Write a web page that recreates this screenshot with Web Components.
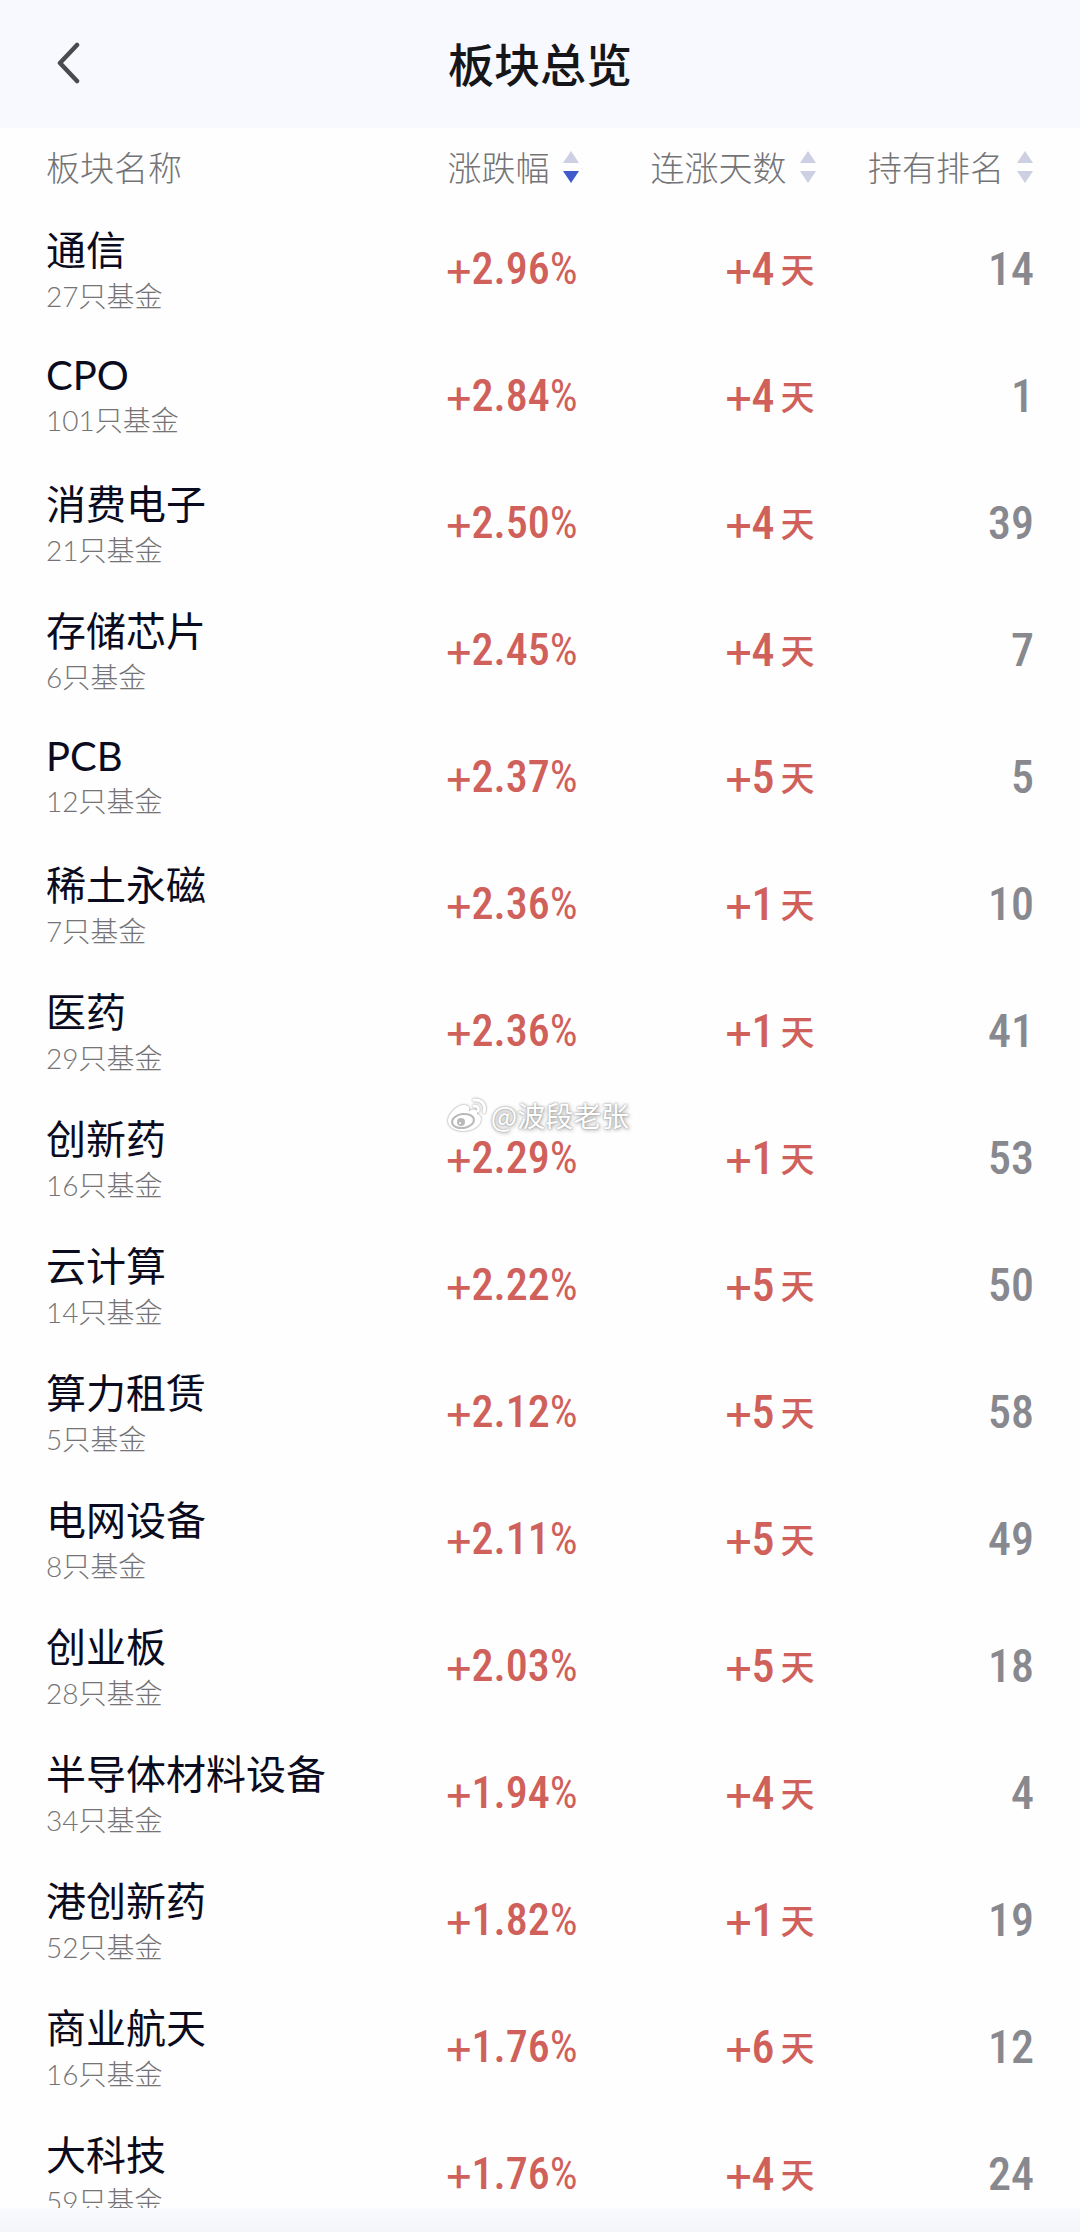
<!DOCTYPE html>
<html lang="zh-CN">
<head>
<meta charset="utf-8">
<meta name="viewport" content="width=device-width, initial-scale=1">
<title>板块总览</title>
<style>
    html, body {
        margin: 0;
        height: 100%;
    }

    body {
        font-family: "Noto Sans CJK SC", "Noto Sans", sans-serif;
        background-color: #fefefe;
        --color-bar: #f8f9fe;
        --color-name: #0b0b20;
        --color-muted: #747477;
        --color-rise: #d0605a;
        --color-rank: #88888f;
        --color-arrow: #cdcfe2;
        --color-arrow-active: #3f5bcb;
        --page-padding: 46px;
        --font-number: "Roboto Condensed", "Liberation Sans Narrow", "Noto Sans CJK SC", sans-serif;
        --font-label: Lato, "Noto Sans CJK SC", sans-serif;
    }
</style>
</head>
<body>
<sector-page>
    <sector-nav-bar slot="header">板块总览</sector-nav-bar>
    <sector-table></sector-table>
    <sector-watermark slot="overlay">@波段老张</sector-watermark>
</sector-page>

<script>
const SECTORS = [
    {name: "通信", funds: 27, change: 2.96, days: 4, rank: 14},
    {name: "CPO", funds: 101, change: 2.84, days: 4, rank: 1},
    {name: "消费电子", funds: 21, change: 2.50, days: 4, rank: 39},
    {name: "存储芯片", funds: 6, change: 2.45, days: 4, rank: 7},
    {name: "PCB", funds: 12, change: 2.37, days: 5, rank: 5},
    {name: "稀土永磁", funds: 7, change: 2.36, days: 1, rank: 10},
    {name: "医药", funds: 29, change: 2.36, days: 1, rank: 41},
    {name: "创新药", funds: 16, change: 2.29, days: 1, rank: 53},
    {name: "云计算", funds: 14, change: 2.22, days: 5, rank: 50},
    {name: "算力租赁", funds: 5, change: 2.12, days: 5, rank: 58},
    {name: "电网设备", funds: 8, change: 2.11, days: 5, rank: 49},
    {name: "创业板", funds: 28, change: 2.03, days: 5, rank: 18},
    {name: "半导体材料设备", funds: 34, change: 1.94, days: 4, rank: 4},
    {name: "港创新药", funds: 52, change: 1.82, days: 1, rank: 19},
    {name: "商业航天", funds: 16, change: 1.76, days: 6, rank: 12},
    {name: "大科技", funds: 59, change: 1.76, days: 4, rank: 24}
];

class SectorElement extends HTMLElement {
    constructor() {
        super();

        this.attachShadow({mode: "open"});
        this.shadowRoot.appendChild(this.constructor.TEMPLATE.content.cloneNode(true));
    }

    static define(name, html) {
        this.TEMPLATE = document.createElement("template");
        this.TEMPLATE.innerHTML = html;
        customElements.define(name, this);
    }
}

class SectorPage extends SectorElement {
}
SectorPage.define("sector-page", `
    <style>
        :host {
            position: relative;
            display: flex;
            flex-direction: column;
            height: 100vh;
            overflow: hidden;
        }
        main {
            flex: 1;
            min-height: 0;
            overflow: hidden;
        }
        footer {
            height: 24px;
            background: linear-gradient(#fafbfd, #f3f5f9);
        }
    </style>
    <slot name="header"></slot>
    <main><slot></slot></main>
    <footer></footer>
    <slot name="overlay"></slot>
`);

class SectorNavBar extends SectorElement {
}
SectorNavBar.define("sector-nav-bar", `
    <style>
        :host {
            display: block;
            background-color: var(--color-bar);
        }
        header {
            display: grid;
            grid-template-columns: 1fr auto 1fr;
            align-items: center;
            height: 124px;
            padding: 0 var(--page-padding) 4px;
        }
        button {
            justify-self: start;
            display: flex;
            padding: 0;
            border: 0;
            background: none;
            cursor: pointer;
        }
        h1 {
            margin: 0;
            font-size: 46px;
            line-height: 64px;
            font-weight: 500;
            color: #161618;
        }
    </style>
    <header>
        <button type="button" aria-label="返回">
            <svg width="44" height="44" viewBox="0 0 44 44" fill="none" stroke="#4a4a4f" stroke-width="4.5" stroke-linecap="round" stroke-linejoin="round">
                <path d="M31 5 L14 23 L31 41"/>
            </svg>
        </button>
        <h1><slot></slot></h1>
    </header>
`);

class SectorSortButton extends SectorElement {
}
SectorSortButton.define("sector-sort-button", `
    <style>
        :host {
            display: inline-block;
        }
        button {
            display: flex;
            align-items: center;
            gap: 12px;
            padding: 0;
            border: 0;
            background: none;
            font: inherit;
            color: inherit;
            white-space: nowrap;
            cursor: pointer;
        }
        path {
            fill: var(--color-arrow);
        }
        :host([direction="ascending"]) .up,
        :host([direction="descending"]) .down {
            fill: var(--color-arrow-active);
        }
    </style>
    <button type="button">
        <slot></slot>
        <svg width="18" height="32" viewBox="0 0 18 32">
            <path class="up" d="M9 0 L17 12 H1 Z"/>
            <path class="down" d="M1 20 H17 L9 32 Z"/>
        </svg>
    </button>
`);

class SectorName extends SectorElement {
}
SectorName.define("sector-name", `
    <style>
        :host {
            display: block;
            font-family: var(--font-label);
            white-space: nowrap;
        }
        .name {
            font-size: 40px;
            line-height: 48px;
            color: var(--color-name);
        }
        /* Latin names sit on a shorter line than Chinese ones. */
        :host([latin]) .name {
            line-height: 45px;
        }
        .funds {
            font-size: 28px;
            line-height: 44px;
            font-weight: 300;
            color: var(--color-muted);
        }
    </style>
    <div class="name"><slot></slot></div>
    <div class="funds"><slot name="funds"></slot></div>
`);

class SectorTable extends SectorElement {
    constructor() {
        super();

        this._body = this.shadowRoot.querySelector("tbody");
        this._buttons = [...this.shadowRoot.querySelectorAll("sector-sort-button")];
        this._buttons.forEach(button => button.addEventListener("click", this._onSortPressed.bind(this, button)));
    }

    connectedCallback() {
        this._render(SECTORS);
    }

    _onSortPressed(button) {
        const direction = button.getAttribute("direction") === "descending" ? "ascending" : "descending";
        this._buttons.forEach(other => {
            other.removeAttribute("direction");
            other.closest("th").removeAttribute("aria-sort");
        });
        button.setAttribute("direction", direction);
        button.closest("th").setAttribute("aria-sort", direction);

        const key = button.dataset.key;
        const sign = direction === "ascending" ? 1 : -1;
        this._render([...SECTORS].sort((a, b) => sign * (a[key] - b[key])));
    }

    _render(sectors) {
        this._body.innerHTML = sectors.map(sector => `
            <tr>
                <td class="title"><sector-name ${/^\w+$/.test(sector.name) ? "latin" : ""}>${sector.name}<span slot="funds">${sector.funds}只基金</span></sector-name></td>
                <td class="change"><span class="sign">+</span>${sector.change.toFixed(2)}<span class="percent">%</span></td>
                <td><div class="days"><span><span class="sign">+</span>${sector.days}</span><span class="unit">天</span></div></td>
                <td class="rank">${sector.rank}</td>
            </tr>
        `).join("");
    }
}
SectorTable.define("sector-table", `
    <style>
        :host {
            display: block;
            padding: 0 var(--page-padding);
        }
        table {
            width: 100%;
            table-layout: fixed;
            border-collapse: collapse;
        }
        th {
            height: 77px;
            padding: 0;
            font-size: 34px;
            line-height: 48px;
            font-weight: 300;
            text-align: right;
            vertical-align: middle;
            color: var(--color-muted);
        }
        th:first-child {
            text-align: left;
        }
        sector-sort-button {
            vertical-align: top;
        }
        .col-name {
            width: 30%;
        }
        .col-value {
            width: 24%;
        }
        td {
            height: 127px;
            padding: 0;
            font-family: var(--font-number);
            font-size: 46px;
            line-height: 60px;
            font-weight: 500;
            text-align: right;
            vertical-align: middle;
            white-space: nowrap;
            color: var(--color-rise);
        }
        .title {
            padding-top: 21px;
            height: 106px;
            font-weight: 400;
            text-align: left;
            vertical-align: top;
        }
        .change {
            padding-right: 2px;
            font-size: 44px;
        }
        .sign {
            font-family: "Noto Sans CJK SC", sans-serif;
            line-height: 1;
            vertical-align: -4px;
        }
        .percent {
            font-weight: 400;
        }
        .days {
            display: flex;
            align-items: center;
            justify-content: flex-end;
            gap: 6px;
            padding-right: 2px;
        }
        .unit {
            font-family: "Noto Sans CJK SC", sans-serif;
            font-size: 34px;
            font-weight: 500;
        }
        .rank {
            color: var(--color-rank);
        }
    </style>
    <table>
        <colgroup>
            <col class="col-name">
            <col class="col-value">
            <col class="col-value">
            <col>
        </colgroup>
        <thead>
            <tr>
                <th scope="col">板块名称</th>
                <th scope="col" aria-sort="descending"><sector-sort-button data-key="change" direction="descending">涨跌幅</sector-sort-button></th>
                <th scope="col"><sector-sort-button data-key="days">连涨天数</sector-sort-button></th>
                <th scope="col"><sector-sort-button data-key="rank">持有排名</sector-sort-button></th>
            </tr>
        </thead>
        <tbody></tbody>
    </table>
`);

class SectorWatermark extends SectorElement {
}
SectorWatermark.define("sector-watermark", `
    <style>
        :host {
            position: absolute;
            inset: 0;
            display: flex;
            align-items: center;
            justify-content: center;
            gap: 4px;
            padding: 0 4px 2px 0;
            font-size: 28px;
            line-height: 40px;
            color: #ffffff;
            text-shadow: 0 0 2px #8c8c8c, 1px 1px 4px #9a9a9a;
            pointer-events: none;
        }
        svg {
            filter: drop-shadow(0 0 1px #8c8c8c);
        }
    </style>
    <svg width="40" height="34" viewBox="0 0 40 34" fill="none">
        <path fill="#ffffff" d="M17 7 C12 6 1 15 1 23 C1 29 8 33 16 33 C27 33 34 27 34 21 C34 18 32 17 30 16 C31 12 28 10 22 13 C23 9 21 7 17 7 Z"/>
        <ellipse cx="16" cy="23" rx="11" ry="7" fill="#ffffff" stroke="#b9b9b9" stroke-width="2" transform="rotate(-8 16 23)"/>
        <circle cx="14" cy="24" r="4" fill="#b9b9b9"/>
        <circle cx="13" cy="25" r="1" fill="#ffffff"/>
        <path stroke="#ffffff" stroke-width="3" stroke-linecap="round" d="M27 2 C35 1 39 7 37 14 M27 8 C31 8 32 10 31 13"/>
    </svg>
    <span><slot></slot></span>
`);
</script>
</body>
</html>
